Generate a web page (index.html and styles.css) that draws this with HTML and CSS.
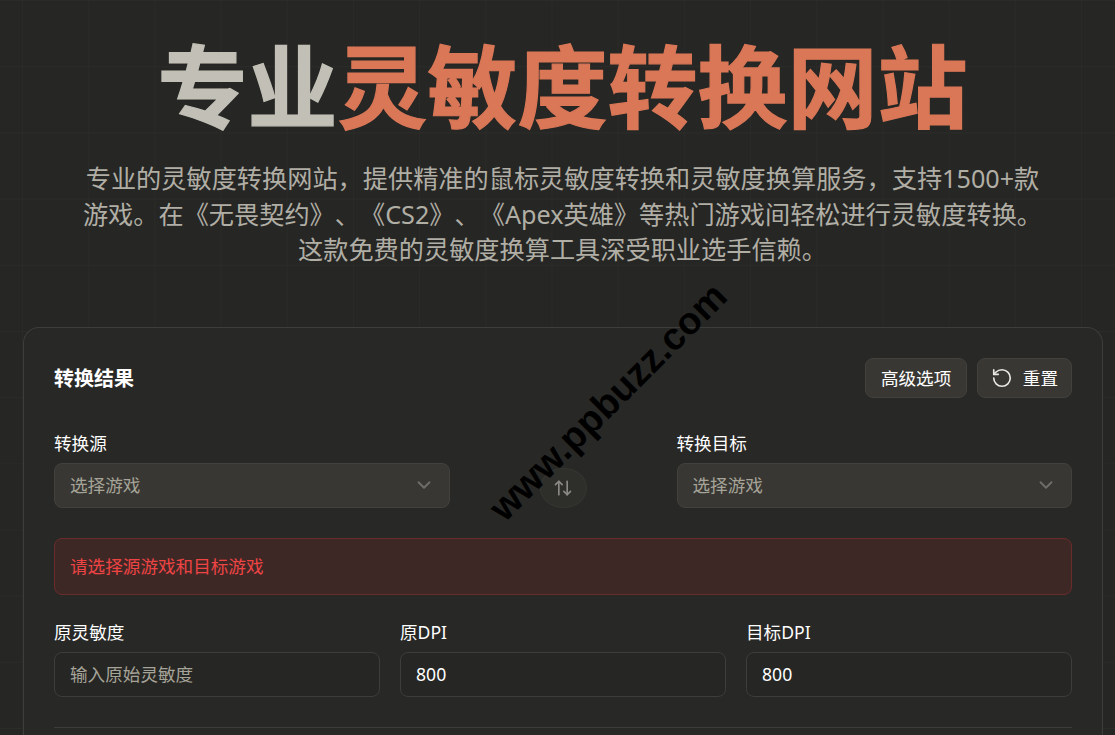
FILE: index.html
```html
<!DOCTYPE html>
<html lang="zh-CN">
<head>
    <meta charset="UTF-8">
    <meta name="viewport" content="width=device-width, initial-scale=1.0">
    <title>专业灵敏度转换网站</title>
    <link rel="stylesheet" href="styles.css">
</head>
<body>

<div class="watermark">www.ppbuzz.com</div>

<header class="hero">
    <h1>专业<span class="accent">灵敏度转换网站</span></h1>
    <p>专业的灵敏度转换网站，提供精准的鼠标灵敏度转换和灵敏度换算服务，支持1500+款游戏。在《无畏契约》、《CS2》、《Apex英雄》等热门游戏间轻松进行灵敏度转换。这款免费的灵敏度换算工具深受职业选手信赖。</p>
</header>

<main class="card">
    <div class="card-head">
        <h2>转换结果</h2>
        <div class="actions">
            <button class="btn">高级选项</button>
            <button class="btn btn-reset">
                <svg class="reset-icon" viewBox="0 0 24 24" fill="none" stroke="currentColor" stroke-width="2" stroke-linecap="round" stroke-linejoin="round">
                    <path d="M3 12a9 9 0 1 0 9-9 9.75 9.75 0 0 0-6.74 2.74L3 8"/>
                    <path d="M3 3v5h5"/>
                </svg>
                重置
            </button>
        </div>
    </div>

    <div class="game-row">
        <div class="field">
            <label>转换源</label>
            <div class="select">
                <span>选择游戏</span>
                <svg class="chevron" viewBox="0 0 24 24" fill="none" stroke="currentColor" stroke-width="2" stroke-linecap="round" stroke-linejoin="round"><path d="m6 9 6 6 6-6"/></svg>
            </div>
        </div>
        <button class="swap">
            <svg viewBox="0 0 24 24" fill="none" stroke="currentColor" stroke-width="2" stroke-linecap="round" stroke-linejoin="round">
                <path d="m21 16-4 4-4-4"/><path d="M17 20V4"/><path d="m3 8 4-4 4 4"/><path d="M7 4v16"/>
            </svg>
        </button>
        <div class="field">
            <label>转换目标</label>
            <div class="select">
                <span>选择游戏</span>
                <svg class="chevron" viewBox="0 0 24 24" fill="none" stroke="currentColor" stroke-width="2" stroke-linecap="round" stroke-linejoin="round"><path d="m6 9 6 6 6-6"/></svg>
            </div>
        </div>
    </div>

    <div class="alert">请选择源游戏和目标游戏</div>

    <div class="input-row">
        <div class="field">
            <label>原灵敏度</label>
            <div class="input placeholder">输入原始灵敏度</div>
        </div>
        <div class="field">
            <label>原DPI</label>
            <div class="input">800</div>
        </div>
        <div class="field">
            <label>目标DPI</label>
            <div class="input">800</div>
        </div>
    </div>

    <hr class="divider">
</main>

</body>
</html>
```

FILE: styles.css
```css
* { box-sizing: border-box; }
html, body { height: 100%; overflow: hidden; }
body {
    margin: 0;
    padding: 0 13px 0 23px;
    position: relative;
    display: flex;
    flex-direction: column;
    font-family: "Noto Sans", "Noto Sans CJK SC", sans-serif;
    color: #fff;
    background-color: #262624;
    background-image:
        linear-gradient(#2b2b29 1px, transparent 1px),
        linear-gradient(90deg, #2a2a28 1px, transparent 1px);
    background-size: 66.2px 66.2px;
    background-position: 0 0, 22px 0;
}
.hero {
    text-align: center;
    padding-top: 27px;
    text-spacing-trim: space-all;
}
h1 {
    margin: 0;
    font-size: 90px;
    line-height: 118px;
    font-weight: 700;
    -webkit-text-stroke: 1.2px currentColor;
    color: #c2c0b6;
}
.accent { color: #d97757; }
.hero p {
    width: 965px;
    margin: 16px auto 0;
    font-size: 25.2px;
    line-height: 35.6px;
    color: #b0aea5;
}
.card {
    flex: 1;
    margin: 59px -1px 0 0;
    padding: 30px 30px 0;
    background: #282826;
    border: 1px solid #3d3d3a;
    border-bottom: 0;
    border-radius: 16px 16px 0 0;
}
.card-head {
    display: flex;
    align-items: center;
    justify-content: space-between;
}
h2 {
    margin: 0 0 1px;
    font-size: 20px;
    font-weight: 700;
}
.actions { display: flex; gap: 10px; }
.btn {
    height: 40px;
    display: flex;
    align-items: center;
    padding: 0 14.5px 1px;
    font: inherit;
    font-size: 17.6px;
    color: #fff;
    background: #383733;
    border: 1px solid #42413d;
    border-radius: 8px;
}
.btn-reset { gap: 10px; padding: 0 13px 1px; }
.reset-icon { width: 22px; height: 22px; color: #e8e8e4; stroke-width: 1.8; margin-bottom: -1px; }
.game-row {
    display: flex;
    align-items: flex-end;
    margin-top: 34px;
}
.game-row .field { flex: 1; }
.swap {
    width: 47px;
    height: 40px;
    margin: 0 90px;
    padding: 0;
    display: flex;
    align-items: center;
    justify-content: center;
    color: #8a8984;
    background: #2e2e2b;
    border: 1px solid #353532;
    border-radius: 50%;
}
.swap svg { width: 20px; height: 20px; }
label {
    display: block;
    margin-bottom: 9px;
    font-size: 17.6px;
    line-height: 22px;
}
.select {
    height: 45px;
    display: flex;
    align-items: center;
    justify-content: space-between;
    padding: 0 14px 2px 15px;
    font-size: 17.6px;
    color: #a6a498;
    background: #383733;
    border: 1px solid #42413d;
    border-radius: 8px;
}
.chevron { width: 22px; height: 22px; color: #6f6e68; margin-bottom: -2px; }
.alert {
    height: 57px;
    display: flex;
    align-items: center;
    margin-top: 30px;
    padding: 0 15px 2px;
    font-size: 17.6px;
    color: #ef4444;
    background: #3e2826;
    border: 1px solid #6a2c2b;
    border-radius: 8px;
}
.input-row {
    display: grid;
    grid-template-columns: repeat(3, 1fr);
    gap: 20px;
    margin-top: 26px;
}
.input {
    height: 45px;
    display: flex;
    align-items: center;
    padding: 0 15px 1px;
    font-size: 17.6px;
    background: #262624;
    border: 1px solid #3d3d3a;
    border-radius: 8px;
}
.placeholder { color: #a6a498; }
.divider {
    margin: 30px 0 0;
    border: 0;
    border-top: 1px solid #3d3d3a;
}
.watermark {
    position: absolute;
    left: 608px;
    top: 402px;
    transform: translate(-50%, -50%) rotate(-45deg);
    font-family: "Liberation Sans", sans-serif;
    font-size: 38px;
    font-weight: 700;
    color: #000;
    white-space: nowrap;
    z-index: 2;
}
```
